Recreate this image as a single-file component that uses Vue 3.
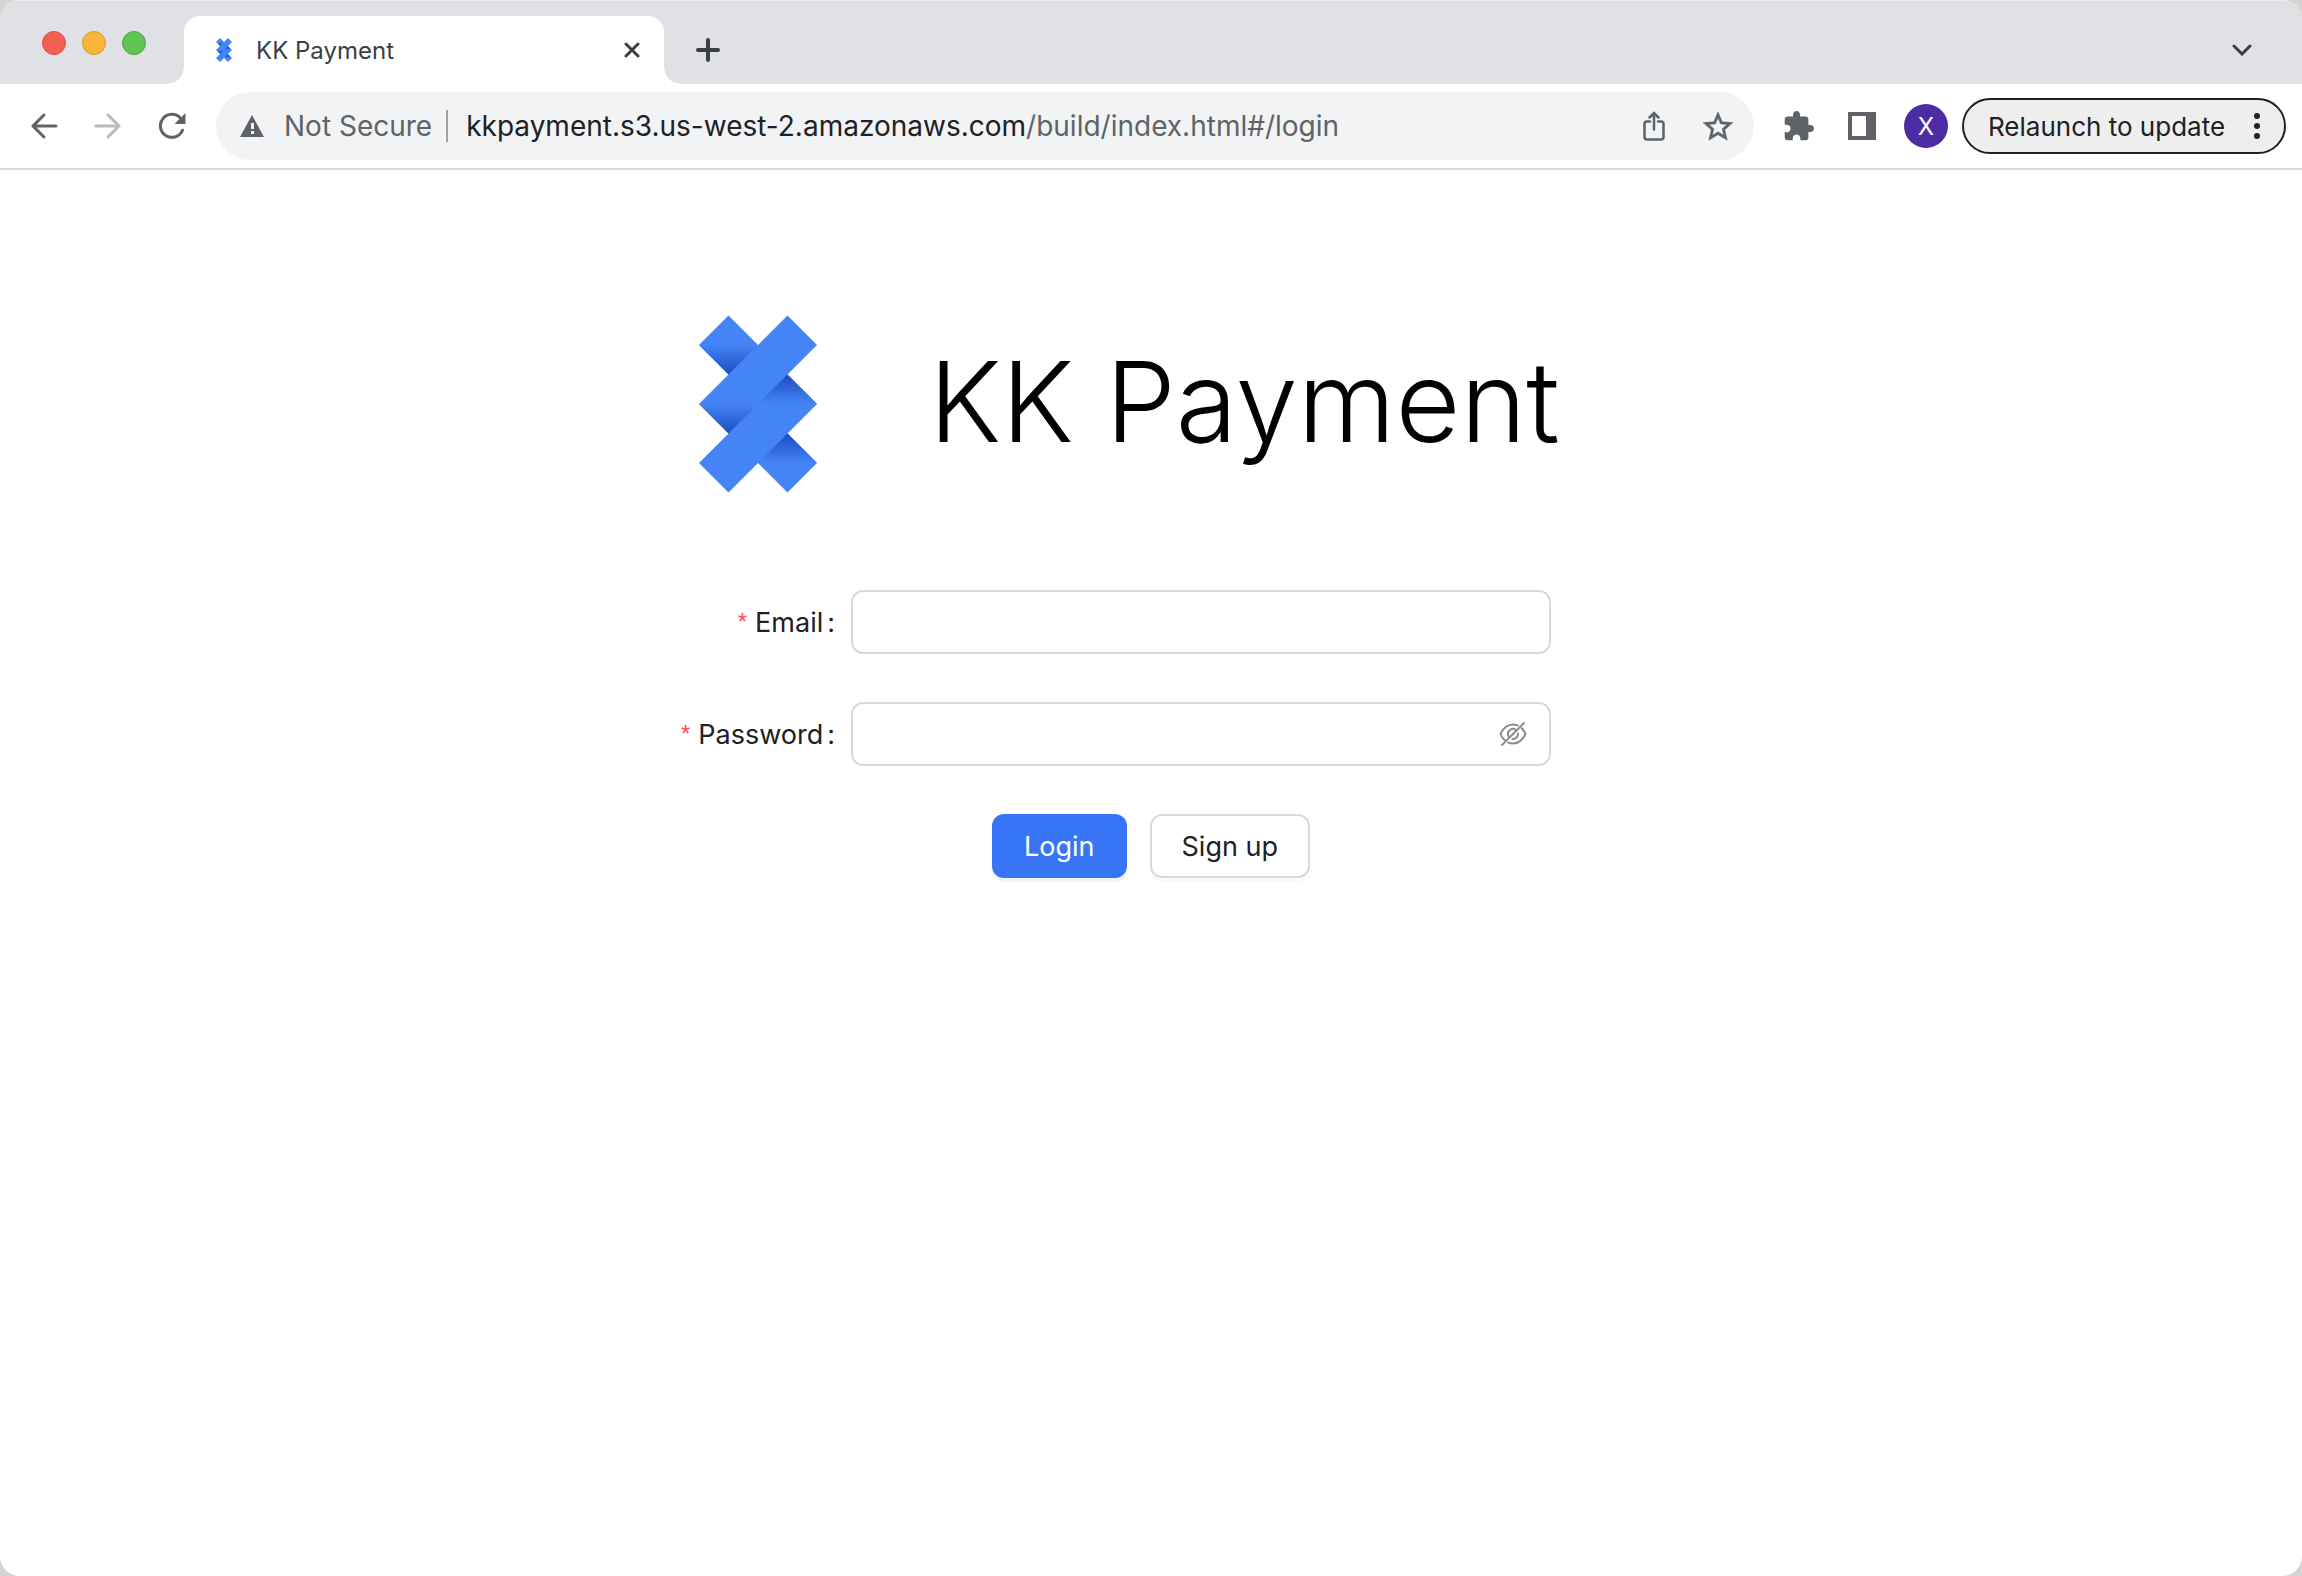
<script setup>
import { ref } from 'vue'

const email = ref('')
const password = ref('')
const showPassword = ref(false)
const lights = ['close', 'minimize', 'zoom']
</script>

<template>
  <div class="window">
    <header class="tabstrip">
      <div class="lights">
        <span v-for="l in lights" :key="l" class="light" :class="l"></span>
      </div>
      <div class="tab">
        <svg class="favicon" viewBox="0 0 16 24" aria-hidden="true">
          <path d="M4 0 8 4 12 0 16 4 12 8 16 12 12 16 16 20 12 24 8 20 4 24 0 20 4 16 0 12 4 8 0 4Z" fill="#4285f4" />
          <path d="M4 8 7 5H2ZM12 8 9 11H14ZM4 16 7 13H2ZM12 16 9 19H14Z" fill="#2459cb" />
        </svg>
        <span class="tab-title">KK Payment</span>
        <button class="icon-btn" type="button" aria-label="Close tab">
          <svg width="16" height="16" viewBox="0 0 16 16" fill="none" stroke="#3c4043" stroke-width="3" stroke-linecap="round">
            <path d="M2 2 14 14M14 2 2 14" />
          </svg>
        </button>
      </div>
      <button class="icon-btn new-tab" type="button" aria-label="New tab">
        <svg width="24" height="24" viewBox="0 0 24 24" fill="none" stroke="#3c4043" stroke-width="4" stroke-linecap="round">
          <path d="M12 2V22M2 12H22" />
        </svg>
      </button>
      <button class="icon-btn tab-search" type="button" aria-label="Search tabs">
        <svg width="20" height="12" viewBox="0 0 20 12" fill="none" stroke="#3c4043" stroke-width="3" stroke-linecap="round">
          <path d="M2 2 10 10 18 2" />
        </svg>
      </button>
    </header>

    <nav class="toolbar">
      <div class="nav-buttons">
        <button class="icon-btn" type="button" aria-label="Back">
          <svg width="28" height="28" viewBox="0 0 28 28" fill="none" stroke="#5f6368" stroke-width="3" stroke-linecap="round">
            <path d="M26 14H3M14 3 3 14 14 25" />
          </svg>
        </button>
        <button class="icon-btn" type="button" aria-label="Forward">
          <svg width="28" height="28" viewBox="0 0 28 28" fill="none" stroke="#bababd" stroke-width="3" stroke-linecap="round">
            <path d="M2 14H25M14 3 25 14 14 25" />
          </svg>
        </button>
        <button class="icon-btn" type="button" aria-label="Reload">
          <svg width="28" height="28" viewBox="0 0 28 28">
            <path d="M24.500 18.200A11.500 11.500 0 1 1 22.300 6" fill="none" stroke="#5f6368" stroke-width="3" stroke-linecap="round" />
            <path d="M27.500 1V12H16.500Z" fill="#5f6368" />
          </svg>
        </button>
      </div>
      <div class="omnibox">
        <svg width="24" height="22" viewBox="0 0 24 22" aria-hidden="true">
          <path d="M12 0 24 22H0Z" fill="#5f6368" />
          <path d="M11 8h3v6h-3zM11 16h3v3h-3z" fill="#f1f3f4" />
        </svg>
        <span class="insecure">Not Secure</span>
        <span class="divider"></span>
        <span class="url"><b>kkpayment.s3.us-west-2.amazonaws.com</b>/build/index.html#/login</span>
        <button class="icon-btn" type="button" aria-label="Share">
          <svg width="22" height="30" viewBox="0 0 22 30" fill="none" stroke="#5f6368" stroke-width="2.500" stroke-linecap="round">
            <path d="M7 10.500H4Q1.500 10.500 1.500 13V26Q1.500 28.500 4 28.500H18Q20.500 28.500 20.500 26V13Q20.500 10.500 18 10.500H15M11 18.500V3M6.500 6.500 11 2 15.500 6.500" />
          </svg>
        </button>
        <button class="icon-btn" type="button" aria-label="Bookmark this tab">
          <svg width="30" height="30" viewBox="2 1.500 20 20" fill="#5f6368" stroke="#5f6368" stroke-width=".3">
            <path d="m22 9.240-7.190-.62L12 2 9.190 8.630 2 9.240l5.460 4.730L5.820 21 12 17.270 18.180 21l-1.630-7.030L22 9.240zM12 15.400l-3.760 2.270 1-4.280-3.320-2.880 4.380-.38L12 6.100l1.710 4.040 4.380.38-3.320 2.880 1 4.280L12 15.400z" />
          </svg>
        </button>
      </div>
      <div class="actions">
        <button class="icon-btn" type="button" aria-label="Extensions">
          <svg width="30" height="30" viewBox="1.500 1 21.500 21.500" fill="#5f6368">
            <path d="M20.500 11H19V7c0-1.100-.9-2-2-2h-4V3.500C13 2.120 11.880 1 10.500 1S8 2.120 8 3.500V5H4c-1.100 0-1.990.9-1.990 2v3.800H3.500c1.490 0 2.700 1.210 2.700 2.700s-1.210 2.700-2.700 2.700H2V20c0 1.100.9 2 2 2h3.800v-1.500c0-1.490 1.210-2.700 2.700-2.700 1.490 0 2.700 1.210 2.700 2.700V22H17c1.100 0 2-.9 2-2v-4h1.500c1.380 0 2.500-1.120 2.500-2.500S21.880 11 20.500 11z" />
          </svg>
        </button>
        <button class="icon-btn" type="button" aria-label="Side panel">
          <svg width="28" height="28" viewBox="0 0 28 28" fill="#5f6368">
            <path d="M0 0H28V28H0ZM4 4V24H18V4Z" fill-rule="evenodd" />
          </svg>
        </button>
        <button class="avatar" type="button">X</button>
      </div>
      <button class="relaunch" type="button">
        Relaunch to update
        <svg width="6" height="28" viewBox="0 0 6 28" fill="#202124" aria-hidden="true">
          <circle cx="3" cy="4" r="3" />
          <circle cx="3" cy="14" r="3" />
          <circle cx="3" cy="24" r="3" />
        </svg>
      </button>
    </nav>

    <main class="page">
      <div class="brand">
        <svg class="logo" viewBox="0 0 4 6" aria-hidden="true">
          <defs>
            <linearGradient id="fadeDown" x1="0" y1="0" x2="0" y2="1">
              <stop offset="0" stop-color="#4484f6" />
              <stop offset="1" stop-color="#1b4cc0" />
            </linearGradient>
            <linearGradient id="fadeUp" x1="0" y1="1" x2="0" y2="0">
              <stop offset="0" stop-color="#4484f6" />
              <stop offset="1" stop-color="#1b4cc0" />
            </linearGradient>
          </defs>
          <path d="M1 0 2 1 3 0 4 1 3 2 4 3 3 4 4 5 3 6 2 5 1 6 0 5 1 4 0 3 1 2 0 1Z" fill="#4484f6" />
          <path d="M0 1H2L1 2Z" fill="url(#fadeDown)" />
          <path d="M0 3H2L1 4Z" fill="url(#fadeDown)" />
          <path d="M2 3H4L3 2Z" fill="url(#fadeUp)" />
          <path d="M2 5H4L3 4Z" fill="url(#fadeUp)" />
        </svg>
        <h1>KK Payment</h1>
      </div>

      <form class="form" @submit.prevent>
        <div class="row">
          <label for="email"><span class="star">*</span>Email<span class="colon">:</span></label>
          <div class="field"><input id="email" v-model="email" type="text" /></div>
        </div>
        <div class="row">
          <label for="password"><span class="star">*</span>Password<span class="colon">:</span></label>
          <div class="field">
            <input id="password" v-model="password" :type="showPassword ? 'text' : 'password'" />
            <button class="icon-btn" type="button" aria-label="Show password" @click="showPassword = !showPassword">
              <svg width="28" height="28" viewBox="0 0 28 28" fill="none" stroke="#8c8c8c" stroke-width="2" stroke-linecap="round">
                <path d="M18.500 5.300A14 14 0 0 0 14 4.500C8 4.500 4 8.500 1.500 14Q3 17.800 5.800 20.300M9.300 22.600Q11.500 23.500 14 23.500C20 23.500 24 19.500 26.500 14Q25 10.600 22.800 8.200" />
                <path d="M17 10A5 5 0 0 0 10 17M19 13.500A5 5 0 0 1 13.500 19" />
                <path d="M3 25 25 3" />
              </svg>
            </button>
          </div>
        </div>
        <div class="buttons">
          <button class="btn primary" type="submit">Login</button>
          <button class="btn" type="button">Sign up</button>
        </div>
      </form>
    </main>
  </div>
</template>

<style>
body {
  background: #d4d4d4;
}
</style>

<style scoped>
.window {
  display: flex;
  flex-direction: column;
  min-height: 100vh;
  overflow: hidden;
  border-radius: 20px;
  background: #fff;
  font-family: Inter, "Liberation Sans", sans-serif;
  color: #202124;
}
button {
  font: inherit;
  color: inherit;
  cursor: pointer;
}
svg {
  display: block;
  flex: none;
}
.icon-btn {
  display: flex;
  flex: none;
  padding: 0;
  border: 0;
  background: none;
}

.tabstrip {
  display: flex;
  align-items: center;
  height: 84px;
  background: #dfe1e5;
  box-shadow: inset 0 1px #eceef1;
}
.lights {
  display: flex;
  gap: 16px;
  width: 142px;
  padding: 2px 0 0 42px;
}
.light {
  box-sizing: border-box;
  width: 24px;
  height: 24px;
  border-radius: 50%;
  border: 1px solid #d3523f;
  background: #f25f50;
}
.light.minimize {
  border-color: #d99a2c;
  background: #f9b43a;
}
.light.zoom {
  border-color: #4aa93e;
  background: #60c554;
}
.tab {
  position: relative;
  display: flex;
  align-items: center;
  align-self: flex-end;
  box-sizing: border-box;
  width: 480px;
  height: 68px;
  padding: 0 24px 0 32px;
  border-radius: 16px 16px 0 0;
  background: #fff;
}
.tab::before,
.tab::after {
  content: "";
  position: absolute;
  bottom: 0;
  width: 16px;
  height: 16px;
}
.tab::before {
  right: 100%;
  background: radial-gradient(circle at 0 0, transparent 15px, #fff 16px);
}
.tab::after {
  left: 100%;
  background: radial-gradient(circle at 100% 0, transparent 15px, #fff 16px);
}
.favicon {
  width: 16px;
  height: 24px;
}
.tab-title {
  flex: 1;
  margin-left: 24px;
  font-size: 24px;
  color: #3c4043;
}
.new-tab {
  margin: 16px 0 0 32px;
}
.tab-search {
  margin: 16px 50px 0 auto;
}

.toolbar {
  display: flex;
  align-items: center;
  height: 84px;
  padding-right: 16px;
  border-bottom: 2px solid #dadada;
}
.nav-buttons {
  display: flex;
  gap: 36px;
  padding: 0 30px;
}
.omnibox {
  display: flex;
  flex: 1;
  align-items: center;
  box-sizing: border-box;
  height: 68px;
  padding: 0 21px 0 24px;
  border-radius: 34px;
  background: #f1f3f4;
  font-size: 28px;
  color: #5f6368;
  white-space: nowrap;
}
.insecure {
  margin: 0 14px 0 20px;
}
.divider {
  width: 2px;
  height: 32px;
  margin-right: 18px;
  background: #9fa2a6;
}
.url {
  flex: 1;
}
.url b {
  font-weight: 400;
  color: #202124;
}
.omnibox .icon-btn {
  margin-left: 38px;
}
.actions {
  display: flex;
  align-items: center;
  gap: 34px;
  padding: 0 14px 0 30px;
}
.avatar {
  width: 44px;
  height: 44px;
  margin-left: -6px;
  padding: 0;
  border: 0;
  border-radius: 50%;
  background: #4b2ca3;
  font-size: 24px;
  color: #fff;
}
.relaunch {
  display: flex;
  align-items: center;
  justify-content: space-between;
  box-sizing: border-box;
  width: 324px;
  height: 56px;
  padding: 0 24px;
  border: 2px solid #202124;
  border-radius: 28px;
  background: #eee;
  font-size: 26px;
  white-space: nowrap;
}

.page {
  flex: 1;
  padding-top: 145px;
}
.brand {
  display: flex;
  align-items: center;
  gap: 112px;
  max-width: 904px;
  margin: 0 auto;
}
.logo {
  width: 118px;
  height: 178px;
}
h1 {
  margin: 0;
  padding-bottom: 6px;
  font-size: 112px;
  font-weight: 300;
  line-height: 160px;
  color: #000;
  white-space: nowrap;
}
.form {
  display: flex;
  flex-direction: column;
  gap: 48px;
  max-width: 1200px;
  margin: 97px auto 0;
  font-size: 27px;
}
.row {
  display: flex;
  align-items: center;
}
.row label {
  width: 25%;
  text-align: right;
}
.star {
  margin-right: 8px;
  font-family: "Liberation Sans", sans-serif;
  font-size: 24px;
  vertical-align: 2px;
  color: #ff4d4f;
}
.colon {
  margin: 0 16px 0 4px;
}
.field {
  display: flex;
  align-items: center;
  box-sizing: border-box;
  width: 700px;
  height: 64px;
  padding: 0 22px;
  border: 2px solid #d9d9d9;
  border-radius: 12px;
}
.field input {
  flex: 1;
  min-width: 0;
  padding: 0;
  border: 0;
  outline: 0;
  background: none;
  font: inherit;
}
.buttons {
  display: flex;
  justify-content: center;
  gap: 23px;
}
.btn {
  height: 64px;
  padding: 0 30px;
  border: 2px solid #d9d9d9;
  border-radius: 12px;
  background: #fff;
  box-shadow: 0 4px #fafafa;
}
.primary {
  border-color: #3875f6;
  background: #3875f6;
  box-shadow: 0 4px #ebf4ff;
  color: #fff;
}
</style>
